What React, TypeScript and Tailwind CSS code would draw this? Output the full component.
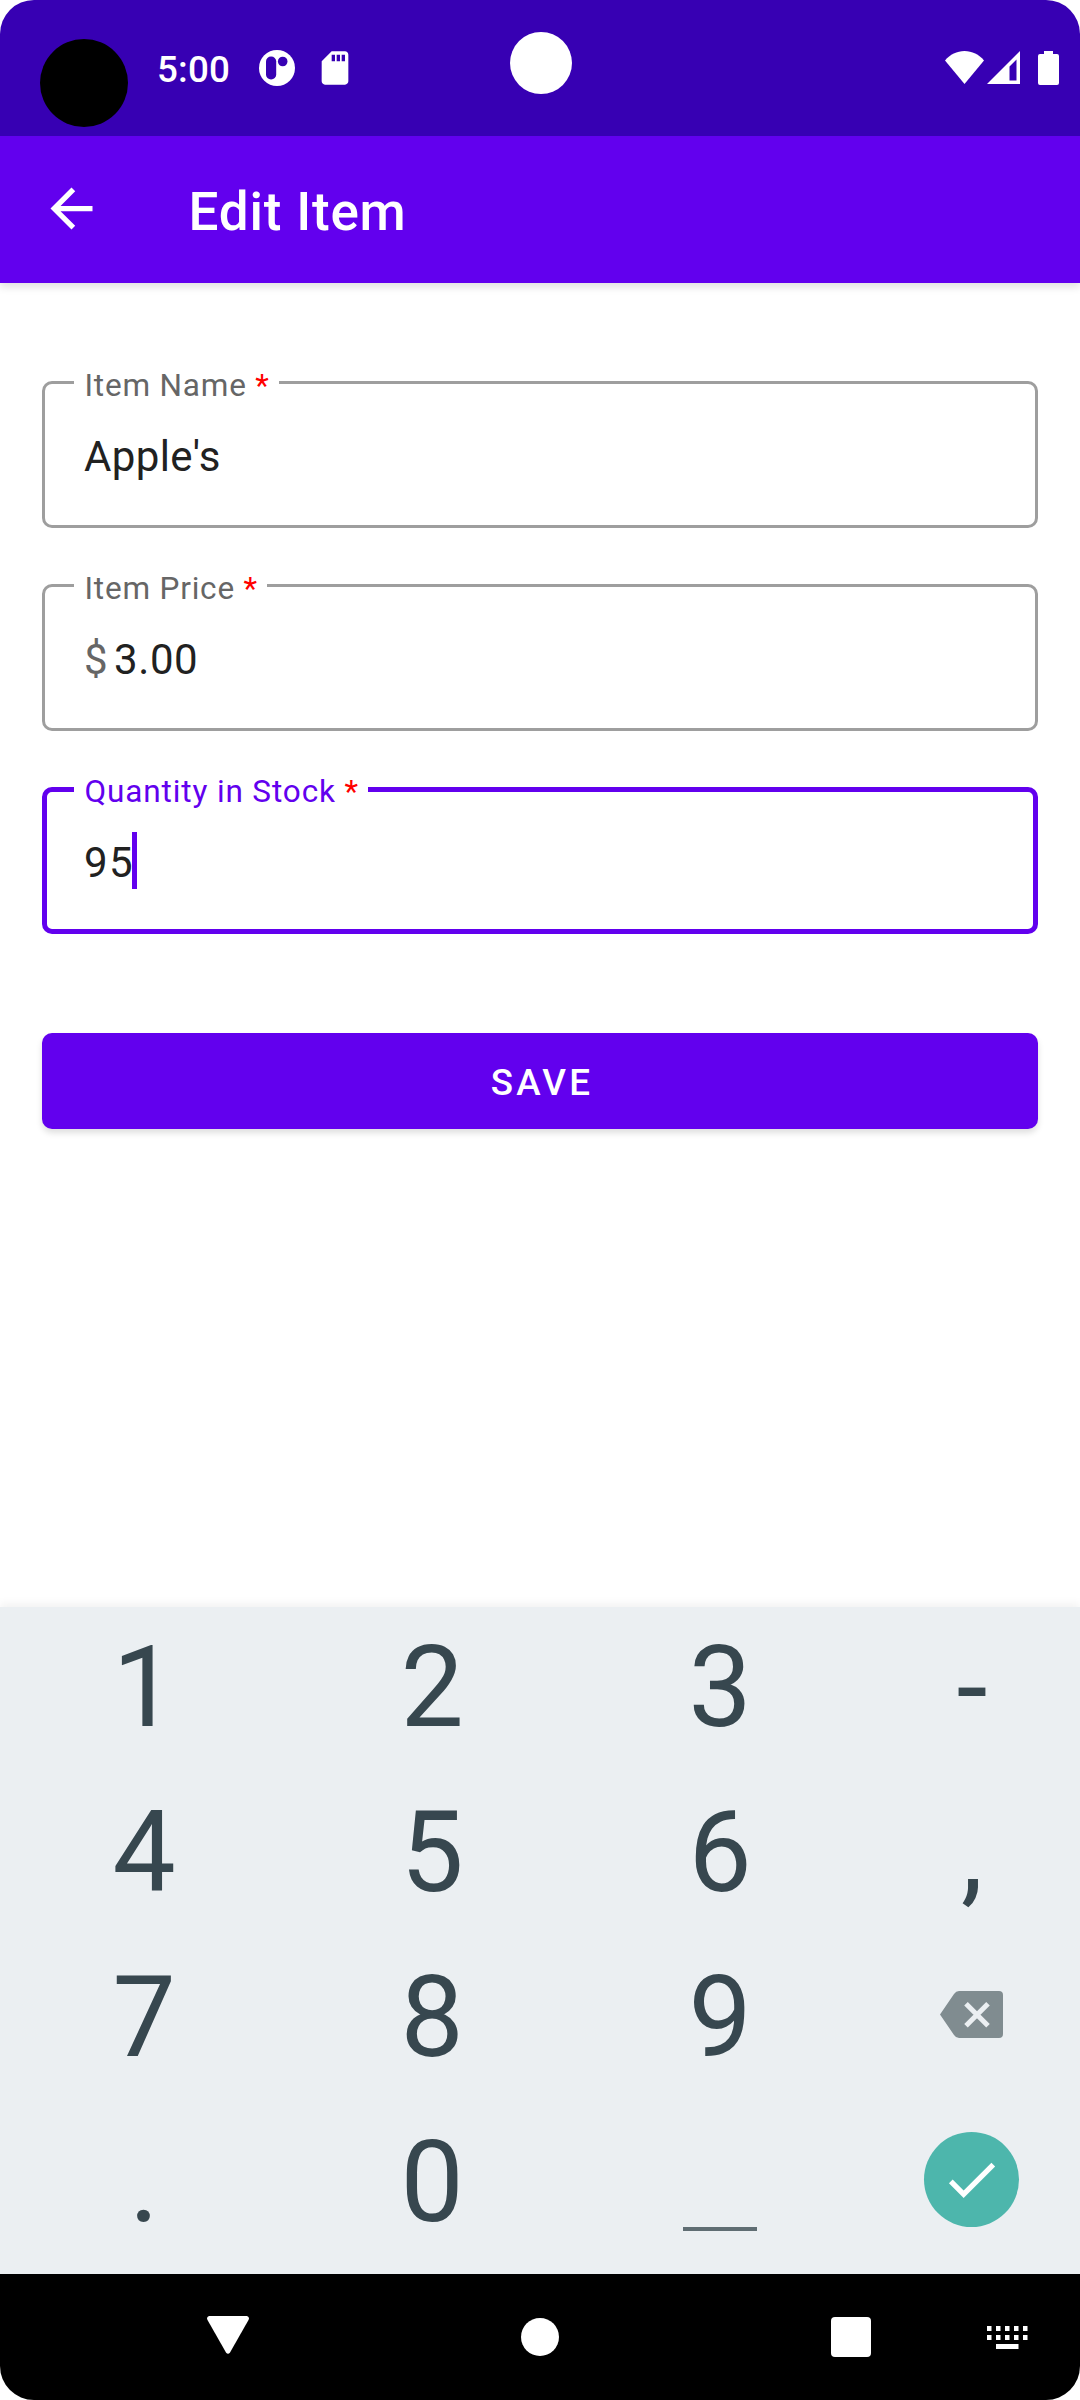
import type { ReactNode } from "react";

function StatusBar() {
  return (
    <header className="relative flex h-[136px] shrink-0 bg-[#3700b3] text-white">
      <div className="ml-10 mt-[39px] size-[88px] rounded-full bg-black" />
      <div className="ml-[29px] mt-[48px] w-[102px] text-[36.75px] leading-[43px] font-medium tracking-[0.2px]">5:00</div>
      <svg className="mt-[50px] size-9" viewBox="0 0 36 36">
        <circle cx="18" cy="18" r="18" fill="#fff" />
        <rect x="7" y="6.500" width="10.200" height="23" rx="5" fill="#3700b3" />
        <circle cx="23.700" cy="11.500" r="4.800" fill="#3700b3" />
      </svg>
      <svg className="ml-5 mt-12 size-10" viewBox="0 0 24 24" fill="#fff">
        <path d="M18 2h-8L4.02 8 4 20c0 1.1.9 2 2 2h12c1.1 0 2-.9 2-2V4c0-1.1-.9-2-2-2zm-6 6h-2V4h2v4zm3 0h-2V4h2v4zm3 0h-2V4h2v4z" />
      </svg>
      <div className="absolute left-[509.5px] top-[31.5px] size-[62px] rounded-full bg-white" />
      <div className="ml-auto mr-[21px] mt-[51px] flex h-[34px]">
        <svg className="h-[34px] w-[39px]" viewBox="0 0 39 34" fill="#fff">
          <path d="M19.5 33 0 9.5C5 3.500 12 0 19.500 0S34 3.500 39 9.500z" />
        </svg>
        <svg className="ml-[3px] h-[34px] w-[33px]" viewBox="0 0 33 34" fill="#fff">
          <path fillRule="evenodd" d="M33 0v33H0zM29.500 8.500 22.500 15.500V29.500h7z" />
        </svg>
        <svg className="ml-[18px] h-[34px] w-[21px]" viewBox="0 0 21 34" fill="#fff">
          <path d="M6 0h9v3h4q2 0 2 2v27q0 2-2 2H2q-2 0-2-2V5q0-2 2-2h4z" />
        </svg>
      </div>
    </header>
  );
}

function AppBar() {
  return (
    <div className="flex h-[147px] shrink-0 items-center bg-[#6200ee] text-white shadow-[0_4px_8px_rgba(0,0,0,0.12)]">
      <svg className="-mt-[2px] ml-[39.5px] size-[63px]" viewBox="0 0 24 24" fill="#fff">
        <path d="M20 11H7.830l5.590-5.590L12 4l-8 8 8 8 1.410-1.410L7.830 13H20v-2z" />
      </svg>
      <h1 className="ml-[86px] mt-[4px] text-[53px] leading-[62px] font-medium tracking-[0.8px]">Edit Item</h1>
    </div>
  );
}

type FieldProps = { label: string; focused?: boolean; children: ReactNode };

function Field({ label, focused = false, children }: FieldProps) {
  return (
    <fieldset
      className={
        focused
          ? "relative h-[147px] rounded-[10px] border-[5px] border-[#6200ee]"
          : "relative h-[147px] rounded-[10px] border-[3px] border-[#9e9e9e]"
      }
    >
      <div
        className={
          focused
            ? "absolute -top-[19px] left-[27px] flex h-[37px] items-center bg-white pl-[10.5px] pr-[9.5px] text-[31.5px] leading-[37px] tracking-[0.87px] whitespace-pre text-[#6200ee]"
            : "absolute -top-[17px] left-[29px] flex h-[37px] items-center bg-white pl-[10.5px] pr-[9px] text-[31.5px] leading-[37px] tracking-[0.8px] whitespace-pre text-[#666]"
        }
      >
        {label} <span className="text-[#f00]">*</span>
      </div>
      <div
        className={
          focused
            ? "relative mt-[46px] flex h-[49px] items-center pl-[37px] text-[42px] leading-[49px] tracking-[1.31px] text-[#212121]"
            : "mt-[48px] flex h-[49px] items-center pl-[39px] text-[42px] leading-[49px] tracking-[0.39px] text-[#212121]"
        }
      >
        {children}
      </div>
    </fieldset>
  );
}

function Key({ children }: { children: ReactNode }) {
  return (
    <button className="flex h-[165px] items-center justify-center pt-[7px] text-[112.5px] leading-[132px] text-[#37474f]">
      {children}
    </button>
  );
}

function Keyboard() {
  return (
    <div className="h-[667px] shrink-0 bg-[#ebeff2] shadow-[0_-4px_8px_rgba(0,0,0,0.05)]">
      <div className="-mt-[5px] grid grid-cols-[288px_288px_288px_216px]">
        <Key>1</Key>
        <Key>2</Key>
        <Key>3</Key>
        <Key>-</Key>
        <Key>4</Key>
        <Key>5</Key>
        <Key>6</Key>
        <Key>,</Key>
        <Key>7</Key>
        <Key>8</Key>
        <Key>9</Key>
        <Key>
          <svg className="mr-px mb-[7px] h-[47px] w-[63px]" viewBox="0 0 63 47">
            <path d="M19 0H59Q63 0 63 4V43Q63 47 59 47H19Q16 47 14 44L0 23.500 14 3Q16 0 19 0z" fill="#808c90" />
            <path d="M26 12.700 48 34.700M48 12.700 26 34.700" stroke="#ebeff2" strokeWidth="5" />
          </svg>
        </Key>
        <Key>.</Key>
        <Key>0</Key>
        <Key>
          <span className="mt-[91px] h-1 w-[74px] bg-[#5f6d73]" />
        </Key>
        <Key>
          <span className="mr-px mb-[7px] flex size-[95px] items-center justify-center rounded-full bg-[#4db6ac]">
            <svg className="size-[63px]" viewBox="0 0 24 24" fill="#fff">
              <path d="M9 16.170L4.830 12l-1.420 1.410L9 19 21 7l-1.410-1.410z" />
            </svg>
          </span>
        </Key>
      </div>
    </div>
  );
}

function NavBar() {
  return (
    <nav className="flex h-[126px] shrink-0 items-center bg-black">
      <svg className="-mt-[5px] ml-[207px] h-[38px] w-[42px]" viewBox="0 0 42 38" fill="#fff">
        <path d="M2 0H40Q43 1 41.500 4L23 36.500Q21 39 19 36.500L.5 4Q-1 1 2 0z" />
      </svg>
      <div className="ml-[272px] size-[37.5px] rounded-full bg-white" />
      <div className="ml-[272.5px] size-10 rounded-[4px] bg-white" />
      <svg className="ml-[116px] h-[23px] w-[41px]" viewBox="0 0 41 23" fill="#fff">
        {[0, 9, 18, 27, 36].map((x) => (
          <g key={x}>
            <rect x={x} y="0" width="4.500" height="5" />
            <rect x={x} y="9" width="4.500" height="5" />
          </g>
        ))}
        <rect x="9" y="18" width="22.500" height="5" />
      </svg>
    </nav>
  );
}

export default function App() {
  return (
    <div className="bg-white">
      <div className="flex h-[2400px] w-[1080px] flex-col overflow-hidden rounded-[34px] bg-white font-[Roboto,sans-serif]">
        <StatusBar />
        <AppBar />
        <main className="flex grow flex-col gap-14 px-[42px] pt-[98px]">
          <Field label="Item Name">Apple's</Field>
          <Field label="Item Price">
            <span className="mr-[6px] text-[#666]">$</span>
            <span className="tracking-[0.6px]">3.00</span>
          </Field>
          <Field label="Quantity in Stock" focused>
            95
            <span className="absolute -top-[6px] left-[85px] h-[57px] w-[5px] bg-[#6200ee]" />
          </Field>
          <button className="mt-[43px] flex h-24 items-center justify-center rounded-[10px] bg-[#6200ee] pt-[2px] pl-[4px] text-[36.75px] leading-[43px] font-medium tracking-[3.28px] text-white shadow-[0_4px_6px_rgba(0,0,0,0.13)]">
            SAVE
          </button>
        </main>
        <Keyboard />
        <NavBar />
      </div>
    </div>
  );
}
